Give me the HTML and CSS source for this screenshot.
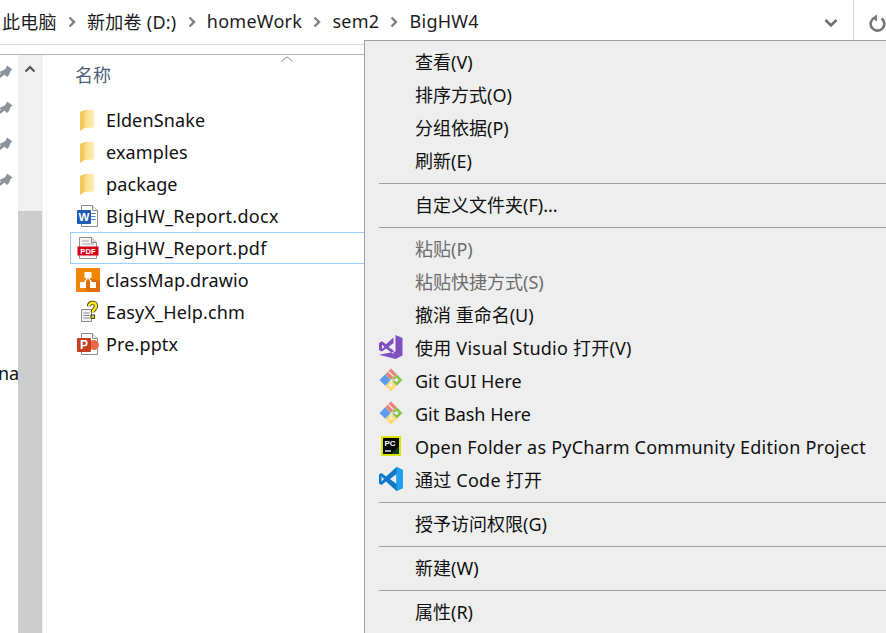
FILE: index.html
```html
<!DOCTYPE html>
<html lang="zh">
<head>
<meta charset="utf-8">
<title>BigHW4</title>
<link rel="stylesheet" href="styles.css">
</head>
<body>
<div class="window">
  <header class="addressbar">
    <nav class="crumbs">
      <span>此电脑</span>
      <svg class="chev" viewBox="0 0 8 12"><path d="M1.500 1.500 6 6 1.500 10.500" /></svg>
      <span>新加卷 (D:)</span>
      <svg class="chev" viewBox="0 0 8 12"><path d="M1.500 1.500 6 6 1.500 10.500" /></svg>
      <span>homeWork</span>
      <svg class="chev" viewBox="0 0 8 12"><path d="M1.500 1.500 6 6 1.500 10.500" /></svg>
      <span>sem2</span>
      <svg class="chev" viewBox="0 0 8 12"><path d="M1.500 1.500 6 6 1.500 10.500" /></svg>
      <span>BigHW4</span>
    </nav>
  </header>
  <div class="body">
    <aside class="pins">
      <svg class="pin" viewBox="0 0 16 16"><use href="#pin"/></svg>
      <svg class="pin" viewBox="0 0 16 16"><use href="#pin"/></svg>
      <svg class="pin" viewBox="0 0 16 16"><use href="#pin"/></svg>
      <svg class="pin" viewBox="0 0 16 16"><use href="#pin"/></svg>
      <span class="cut">na</span>
    </aside>
    <div class="scrollbar">
      <div class="track">
        <svg class="up" viewBox="0 0 12 8"><path d="M1.500 6.500 6 2l4.500 4.500"/></svg>
      </div>
      <div class="thumb"></div>
    </div>
    <main class="list">
      <div class="colhead">
        <span>名称</span>
        <svg class="sort" viewBox="0 0 12 6"><path d="M.5 5.500 6 .8l5.500 4.700"/></svg>
      </div>
      <ul class="files">
        <li class="file">
          <svg class="ficon" viewBox="0 0 24 24"><use href="#folder"/></svg>
          <span>EldenSnake</span>
        </li>
        <li class="file">
          <svg class="ficon" viewBox="0 0 24 24"><use href="#folder"/></svg>
          <span>examples</span>
        </li>
        <li class="file">
          <svg class="ficon" viewBox="0 0 24 24"><use href="#folder"/></svg>
          <span>package</span>
        </li>
        <li class="file">
          <svg class="ficon" viewBox="0 0 24 24">
            <path d="M5.500 1.500h11l5 5v16h-16z" fill="#fff" stroke="#8f8f8f"/>
            <path d="M16.500 1.500v5h5" fill="#eee" stroke="#8f8f8f"/>
            <path d="M15 9.500h4.500M15 12.500h4.500M15 15.500h4.500" stroke="#3f86d6" fill="none"/>
            <rect x="1" y="6" width="14" height="14" rx="1" fill="#1f5bb5"/>
            <text class="badge" x="8" y="17.200" font-size="11.500">W</text>
          </svg>
          <span class="under">BigHW_Report.docx</span>
        </li>
        <li class="file selected">
          <svg class="ficon" viewBox="0 0 24 24">
            <path d="M3.500 1.500h12l5 5v16h-17z" fill="#f4f4f4" stroke="#8f8f8f"/>
            <path d="M15.500 1.500v5h5" fill="#ddd" stroke="#8f8f8f"/>
            <path d="M6 5h7M6 8h12" stroke="#aaa" fill="none"/>
            <rect x="1.500" y="10.500" width="21" height="9" fill="#d6001c"/>
            <text class="badge" x="12" y="17.800" font-size="7.500">PDF</text>
          </svg>
          <span class="under">BigHW_Report.pdf</span>
        </li>
        <li class="file">
          <svg class="ficon" viewBox="0 0 24 24">
            <rect width="24" height="24" fill="#f08705"/>
            <path d="M24 13v11H12L6 18l6-8z" fill="#df6c0c"/>
            <path d="M8.500 4h7v6h-2.300l3 4H20v6h-6v-6h.700l-2.700-3.600L9.300 14H10v6H4v-6h3.800l3-4H8.500z" fill="#fff"/>
          </svg>
          <span>classMap.drawio</span>
        </li>
        <li class="file">
          <svg class="ficon" viewBox="0 0 24 24">
            <path d="M5.500 9.500h9l1 1v11h-10z" fill="#f3f3f3" stroke="#8a8a8a"/>
            <path d="M7.500 13h6M7.500 15.500h6M7.500 18h6" stroke="#8a8a8a"/>
            <path class="qo" d="M13 6.200c0-4.500 7-4.500 7 0 0 2.800-3.200 2.800-3.200 6"/>
            <path class="qi" d="M13 6.200c0-4.500 7-4.500 7 0 0 2.800-3.200 2.800-3.200 6"/>
            <rect x="15" y="15" width="3.600" height="3.300" fill="#ffe81a" stroke="#222" stroke-width=".9"/>
          </svg>
          <span>EasyX_Help.chm</span>
        </li>
        <li class="file">
          <svg class="ficon" viewBox="0 0 24 24">
            <path d="M5.500 1.500h11l5 5v16h-16z" fill="#fff" stroke="#8f8f8f"/>
            <path d="M16.500 1.500v5h5" fill="#eee" stroke="#8f8f8f"/>
            <path d="M15 9a5 5 0 1 1-1 7v-7z" fill="#ea6b4a"/>
            <rect x="1" y="6" width="14" height="14" rx="1" fill="#c5401f"/>
            <text class="badge" x="8" y="17.200" font-size="12">P</text>
          </svg>
          <span>Pre.pptx</span>
        </li>
      </ul>
    </main>
  </div>

  <div class="menu">
    <div class="item"><span>查看(V)</span></div>
    <div class="item"><span>排序方式(O)</span></div>
    <div class="item"><span>分组依据(P)</span></div>
    <div class="item"><span>刷新(E)</span></div>
    <hr class="sep">
    <div class="item"><span>自定义文件夹(F)...</span></div>
    <hr class="sep">
    <div class="item off"><span>粘贴(P)</span></div>
    <div class="item off"><span>粘贴快捷方式(S)</span></div>
    <div class="item"><span>撤消 重命名(U)</span></div>
    <div class="item wide">
      <svg class="micon" viewBox="0 0 24 24">
        <path fill-rule="evenodd" d="M16.500 0 23.500 3v17.500L16.500 24 0 19.800l16.500-3.300zM0 8l3-1.800 4 3L14.500 2.500V19L7 13.500 3 16.500 0 15zM3 9.500v4.500L5.500 12zM9.500 12l5 3.500v-7.500z" fill="#7f4fc0"/>
      </svg>
      <span>使用 Visual Studio 打开(V)</span>
    </div>
    <div class="item latin">
      <svg class="micon" viewBox="0 0 24 24"><use href="#git"/></svg>
      <span>Git GUI Here</span>
    </div>
    <div class="item latin">
      <svg class="micon" viewBox="0 0 24 24"><use href="#git"/></svg>
      <span>Git Bash Here</span>
    </div>
    <div class="item latin wide">
      <svg class="micon" viewBox="0 0 24 24">
        <rect x="2" y="2" width="20" height="20" fill="#d6e600"/>
        <rect x="4" y="4" width="16" height="16" fill="#050505"/>
        <path d="M12 20l8-8v8z" fill="#0c3a1c"/>
        <text class="badge" x="11" y="12" font-size="8">PC</text>
        <path d="M6 17h6" stroke="#fff" stroke-width="1.300"/>
      </svg>
      <span>Open Folder as PyCharm Community Edition Project</span>
    </div>
    <div class="item wide">
      <svg class="micon" viewBox="0 0 24 24">
        <path fill-rule="evenodd" d="M17.500 0 7 9.500 2.500 6 0 7.500v9L2.500 18 7 14.500 17.500 24 24 21V3zM17.500 7v10L11 12zM2.500 9.500v5L5 12z" fill="#0f78c8"/>
        <path fill-rule="evenodd" d="M17.500 0 24 3v18l-6.500 3z" fill="#1ea1f1"/>
      </svg>
      <span>通过 Code 打开</span>
    </div>
    <hr class="sep">
    <div class="item"><span>授予访问权限(G)</span></div>
    <hr class="sep">
    <div class="item"><span>新建(W)</span></div>
    <hr class="sep">
    <div class="item"><span>属性(R)</span></div>
  </div>

  <div class="topright">
    <svg class="dropdown" viewBox="0 0 14 10"><path d="M1.500 2 7 7.500 12.500 2"/></svg>
    <div class="refresh">
      <svg viewBox="0 0 18 18"><path class="arc" d="M6 4a6.800 6.800 0 1 0 7.500.4"/><path class="head" d="M9 .5v7L4 4z"/></svg>
    </div>
  </div>
</div>

<svg class="defs" width="0" height="0">
  <defs>
    <linearGradient id="fgrad" x1="0" y1="0" x2="1" y2="0">
      <stop offset="0" stop-color="#f8da82"/>
      <stop offset="1" stop-color="#fef0b8"/>
    </linearGradient>
    <path id="pin" d="M10 1.500 15.500 5.500 13.500 7 12 11 10 13 7.500 10.500 3 14 0 16V12L4 9.500 2.500 8 5.500 6.500 8.500 5z"/>
    <g id="folder">
      <path d="M8 2h9.500q.7 0 .7.800V19q0 .8-.7.800H8z" fill="url(#fgrad)"/>
      <path d="M4 4 8.500 2v18L4 23z" fill="#f4c95c"/>
    </g>
    <g id="git">
      <path d="M12 .5 17.700 6.200 12 11.800 6.300 6.200z" fill="#ee7f72"/>
      <path d="M17.800 6.300 23.500 12l-5.700 5.700L12.200 12z" fill="#8cc152"/>
      <path d="M12 12.200l5.700 5.600L12 23.500l-5.700-5.700z" fill="#ffdb6e"/>
      <path d="M6.200 6.300 11.800 12l-5.600 5.700L.5 12z" fill="#5c9ded"/>
      <path d="M9.500 3.500l5 5" stroke="#f0f0f0" stroke-width="1.200"/>
      <path d="M12 12l5 0M12 12v5" stroke="#f0f0f0" stroke-width="1"/>
      <circle cx="17.500" cy="12" r="1.700" fill="#f0f0f0"/>
      <circle cx="12" cy="17.500" r="1.700" fill="#f0f0f0"/>
    </g>
  </defs>
</svg>
</body>
</html>
```

FILE: styles.css
```css
* { box-sizing: border-box; }
html, body { margin: 0; padding: 0; }
body {
  width: 886px;
  height: 633px;
  overflow: hidden;
  background: #fff;
  color: #111;
  font-family: "Noto Sans", "Noto Sans CJK SC", sans-serif;
  font-size: 18px;
}
.window { position: relative; width: 886px; height: 633px; overflow: hidden; }
.defs { position: absolute; }

.addressbar {
  height: 55px;
  border-bottom: 1px solid #b4b4b4;
  position: relative;
}
.addressbar::after {
  content: "";
  position: absolute;
  left: 0; right: 0; top: 44px;
  height: 1px;
  background: #dcdcdc;
}
.crumbs {
  height: 42px;
  display: flex;
  align-items: center;
  padding-left: 2px;
  color: #1c1c1c;
  font-size: 18px;
  letter-spacing: .25px;
}
.chev { width: 8px; height: 12px; margin: 2px 11.300px 0 11px; }
.chev path { fill: none; stroke: #808080; stroke-width: 2.400; }

.body { display: flex; height: 578px; }
.pins { width: 18px; position: relative; display: flex; flex-direction: column; padding-top: 9px; gap: 20px; }
.pin { width: 16px; height: 16px; margin-left: -3px; fill: #8c939a; }
.cut { position: absolute; left: -2px; top: 306px; }

.scrollbar { width: 25px; display: flex; flex-direction: column; background: #f0f0f0; }
.track { height: 156px; display: flex; justify-content: center; padding-top: 10px; padding-right: 1px; }
.up { width: 12px; height: 8px; }
.up path { fill: none; stroke: #555; stroke-width: 2.200; }
.thumb { flex: 1; background: #cdcdcd; margin-right: 1px; }

.list { flex: 1; padding-left: 3px; background: linear-gradient(to right, #fff 3px, #f5f5f5 3px, #f5f5f5 4px, #fff 4px); }
.colhead { height: 49px; position: relative; padding: 6px 0 0 29px; font-size: 18px; color: #4c607a; }
.sort { position: absolute; left: 235px; top: 1px; width: 12px; height: 6px; }
.sort path { fill: none; stroke: #8a8a8a; stroke-width: 1; }
.files { list-style: none; margin: 0; padding: 0; width: 330px; }
.file {
  height: 32px;
  display: flex;
  align-items: center;
  padding-left: 30px;
  gap: 6px;
  white-space: nowrap;
  letter-spacing: .13px;
}
.file .under { letter-spacing: .3px; }
.file.selected { outline: 1px solid #99d1ff; outline-offset: -1px; margin-left: 24px; padding-left: 6px; }
.ficon { width: 24px; height: 24px; flex: none; }
.badge {
  font-family: "Liberation Sans", sans-serif;
  font-weight: 700;
  fill: #fff;
  text-anchor: middle;
}
.qo { fill: none; stroke: #222; stroke-width: 4.200; }
.qi { fill: none; stroke: #ffe81a; stroke-width: 2.600; }

.menu {
  position: absolute;
  left: 364px;
  top: 40px;
  width: 530px;
  height: 600px;
  background: #eeeeee;
  border: 1px solid #a0a0a0;
  padding-top: 5px;
}
.item {
  height: 33px;
  display: flex;
  align-items: center;
  position: relative;
  padding: 0 0 4px 50px;
  white-space: nowrap;
  color: #111;
}
.item.off { color: #6d6d6d; }
.item.latin { padding-bottom: 2px; }
.item.wide span { letter-spacing: .23px; }
.micon { position: absolute; left: 14px; top: 3px; width: 24px; height: 24px; }
.sep {
  height: 1px;
  margin: 5px 0 5px 14px;
  border: 0;
  background: #a0a0a0;
}

.topright { position: absolute; left: 820px; top: 0; width: 66px; height: 40px; display: flex; align-items: center; }
.dropdown { width: 14px; height: 10px; margin: 5px 0 0 4px; }
.dropdown path { fill: none; stroke: #6f6f6f; stroke-width: 2.600; }
.refresh { margin-left: 15px; height: 40px; padding: 14px 0 0 14px; border-left: 1px solid #d8d8d8; }
.refresh svg { display: block; width: 18px; height: 18px; }
.arc { fill: none; stroke: #777; stroke-width: 2.600; }
.head { fill: #777; }
```
